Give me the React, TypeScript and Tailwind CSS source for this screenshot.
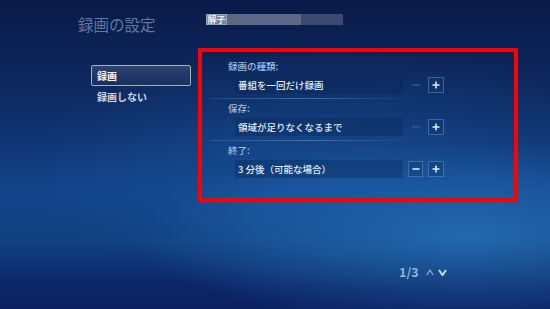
import React from 'react';

const FONT = '"Noto Sans CJK JP", "Noto Sans", sans-serif';

interface SettingRowProps {
  label: string;
  value: string;
  canDecrease: boolean;
  last?: boolean;
}

const StepButton: React.FC<{ sign: '+' | '-'; active: boolean }> = ({ sign, active }) => (
  <div
    className={
      'flex h-[16px] items-center justify-center ' +
      (active ? 'border border-[#6f93bd]/50 bg-[#0f3a70]/40' : '')
    }
    style={{ width: sign === '+' ? 16 : 15 }}
  >
    <svg width="8" height="8" viewBox="0 0 8 8">
      <rect x="0.5" y="3.2" width="7" height="1.6" fill={active ? '#d8e4f0' : '#2f5b8c'} />
      {sign === '+' && <rect x="3.2" y="0.5" width="1.6" height="7" fill="#d8e4f0" />}
    </svg>
  </div>
);

const SettingRow: React.FC<SettingRowProps> = ({ label, value, canDecrease, last }) => (
  <div className="flex flex-col">
    <div className="pl-[26px] text-[9.5px] leading-[16px] font-medium text-[#9cbde2]">{label}</div>
    <div className="mt-[2px] flex items-center pl-[33px]">
      <div className="flex h-[18px] w-[168px] items-center bg-[#082554]/35 pl-[3px] text-[9.5px] font-medium text-[#e3ebf3]">
        {value}
      </div>
      <div className="ml-[5px]">
        <StepButton sign="-" active={canDecrease} />
      </div>
      <div className="ml-[5px]">
        <StepButton sign="+" active />
      </div>
    </div>
    {!last && (
      <div className="mt-[4px] mb-[1px] ml-[8px] h-px w-[200px] bg-gradient-to-r from-[#6f9ccb]/20 via-[#7fa9d6]/45 to-transparent" />
    )}
  </div>
);

export default function App() {
  return (
    <div
      className="relative flex h-[309px] w-[550px] flex-col overflow-hidden bg-[linear-gradient(180deg,#0a1a48_0%,#0e2d66_35%,#13438a_62%,#114080_78%,#0c2768_92%,#0b2060_100%)]"
      style={{ fontFamily: FONT }}
    >
      <div className="pointer-events-none absolute inset-0 bg-[radial-gradient(ellipse_60%_30%_at_85%_76%,rgba(45,130,200,0.6),transparent)]" />
      <div className="pointer-events-none absolute inset-0 bg-[radial-gradient(ellipse_55%_40%_at_60%_55%,rgba(30,100,175,0.4),transparent)]" />

      {/* header */}
      <div className="relative flex h-[48px] items-start pl-[78px]">
        <div className="mt-[13px] w-[128px] text-[15.5px] leading-[22px] text-[#5e7a9f]">録画の設定</div>
        <div className="mt-[14px] flex h-[11px]">
          <div className="flex h-[11px] w-[21px] items-center justify-center border border-[#9aa4b8] bg-[#7b8498] text-[9px] leading-none font-bold text-[#e8ecf2]">
            解子
          </div>
          <div className="h-[11px] w-[74px] bg-[#5d6786]" />
          <div className="h-[11px] w-[42px] bg-[#3b4872]" />
        </div>
      </div>

      {/* body */}
      <div className="relative flex pl-[91px]">
        <div className="mt-[17px] flex w-[100px] flex-col">
          <div className="flex h-[21px] items-center rounded-[2px] border border-[#a6b2c2] bg-gradient-to-b from-[#3a4f78]/70 to-[#1b3160]/70 pl-[5px] text-[10px] font-bold text-[#f2f5f9]">
            録画
          </div>
          <div className="mt-[2px] pl-[6px] text-[10px] leading-[18px] font-bold text-[#cdd7e3]">録画しない</div>
        </div>

        <div className="ml-[7px] flex h-[154px] w-[320px] flex-col border-4 border-[#ff0000] pt-[6px]">
          <SettingRow label="録画の種類:" value="番組を一回だけ録画" canDecrease={false} />
          <SettingRow label="保存:" value="領域が足りなくなるまで" canDecrease={false} />
          <SettingRow label="終了:" value="3 分後（可能な場合）" canDecrease last />
        </div>
      </div>

      {/* page indicator */}
      <div className="relative mt-[62px] flex items-center pl-[399px] text-[12.5px] leading-[16px] font-bold text-[#93b2d4]">
        <span>1/3</span>
        <svg className="ml-[7px]" width="8" height="7" viewBox="0 0 8 7">
          <path d="M0.8 6 L4 1.2 L7.2 6" fill="none" stroke="#8fb0d2" strokeWidth="1.2" />
        </svg>
        <svg className="ml-[4px]" width="9" height="7" viewBox="0 0 9 7">
          <path d="M1 1 L4.5 6 L8 1" fill="none" stroke="#c9d9ea" strokeWidth="2" />
        </svg>
      </div>
    </div>
  );
}
